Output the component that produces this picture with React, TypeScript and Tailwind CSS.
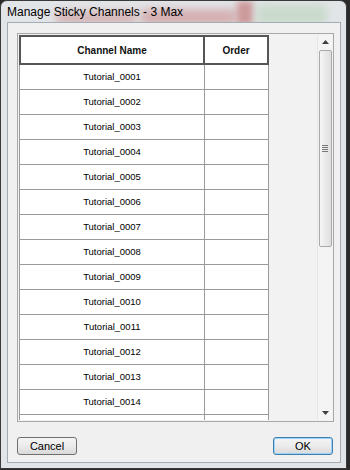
const channels = Array.from({ length: 14 }, (_, i) => `Tutorial_${String(i + 1).padStart(4, "0")}`);

export default function App() {
  return (
    <div className="w-[350px] h-[470px] bg-[#2a2a2a] overflow-hidden font-['Liberation_Sans',Arial,sans-serif]">
      <div className="relative w-[347px] h-[469px] rounded-t-[7px] border border-[#3a3a3a] bg-[#e2e5e8] flex flex-col overflow-hidden">
        {/* blurred glass behind the title */}
        <div className="absolute left-[55px] top-[10px] w-[80px] h-[14px] bg-[#c98a8a] blur-[4px] opacity-50" />
        <div className="absolute left-[140px] top-[8px] w-[95px] h-[16px] bg-[#c77b7b] blur-[4px] opacity-50" />
        <div className="absolute left-[236px] top-[0px] w-[16px] h-[24px] bg-[#c06868] blur-[3px] opacity-60" />
        <div className="absolute left-[256px] top-[4px] w-[70px] h-[20px] bg-[#b9d3b9] blur-[4px] opacity-60" />

        <div className="relative h-[21px] px-[6px] flex items-center text-[12px] text-black">
          Manage Sticky Channels - 3 Max
        </div>

        <div className="relative ml-[6px] mr-[5px] mb-[5px] flex-1 bg-[#f0f0f0] border border-[#a3abb4] flex flex-col pl-[9px] pr-[6px] pt-[10px]">
          {/* list area */}
          <div className="h-[389px] border border-[#a8a8a8] bg-[#f2f2f2] p-px flex">
            <div className="w-[250px] overflow-hidden">
              <div className="flex h-[30px] bg-white border-t-2 border-l-2 border-b-2 border-[#555] text-[10px] font-bold text-[#111]">
                <div className="w-[184px] border-r-2 border-[#555] flex items-center justify-center">Channel Name</div>
                <div className="flex-1 border-r-2 border-[#555] flex items-center justify-center">Order</div>
              </div>
              {channels.map((c) => (
                <div key={c} className="flex h-[25px] bg-white border-b border-[#9a9a9a] text-[9.5px] text-black">
                  <div className="w-[186px] border-l border-r border-[#9a9a9a] flex items-center justify-center pt-[1px]">{c}</div>
                  <div className="flex-1 border-r border-[#9a9a9a]" />
                </div>
              ))}
              {/* next row, scrolled out of view */}
              <div className="flex h-[25px] bg-white">
                <div className="w-[186px] border-l border-r border-[#9a9a9a]" />
                <div className="flex-1 border-r border-[#9a9a9a]" />
              </div>
            </div>
            <div className="flex-1" />
            {/* scrollbar */}
            <div className="w-[15px] bg-[#f4f4f4] border-l border-[#e6e6e6] flex flex-col items-center">
              <div className="h-[14px] w-full flex items-center justify-center">
                <svg width="7" height="4" viewBox="0 0 7 4"><path d="M0 4 L3.5 0 L7 4 Z" fill="#404040" /></svg>
              </div>
              <div className="mt-[1px] h-[197px] w-[13px] rounded-[2px] border border-[#a9a9a9] bg-gradient-to-r from-[#f6f6f6] to-[#dedede] flex items-center justify-center">
                <div className="flex flex-col gap-[1px]">
                  <div className="w-[6px] h-px bg-[#777]" />
                  <div className="w-[6px] h-px bg-[#777]" />
                  <div className="w-[6px] h-px bg-[#777]" />
                  <div className="w-[6px] h-px bg-[#777]" />
                </div>
              </div>
              <div className="flex-1" />
              <div className="h-[14px] w-full flex items-center justify-center">
                <svg width="7" height="4" viewBox="0 0 7 4"><path d="M0 0 L3.5 4 L7 0 Z" fill="#404040" /></svg>
              </div>
            </div>
          </div>

          {/* buttons */}
          <div className="mt-[15px] flex justify-between">
            <button className="w-[60px] h-[18px] rounded-[3px] border border-[#707070] bg-gradient-to-b from-[#f4f4f4] via-[#ebebeb] to-[#d9d9d9] text-[11px] text-black leading-none">
              Cancel
            </button>
            <button className="mr-[1px] w-[60px] h-[18px] rounded-[3px] border border-[#3c7fb1] shadow-[inset_0_0_0_1px_#9fd3f5] bg-gradient-to-b from-[#f4f4f4] via-[#ebebeb] to-[#d9d9d9] text-[11px] text-black leading-none">
              OK
            </button>
          </div>
        </div>
      </div>
    </div>
  );
}
